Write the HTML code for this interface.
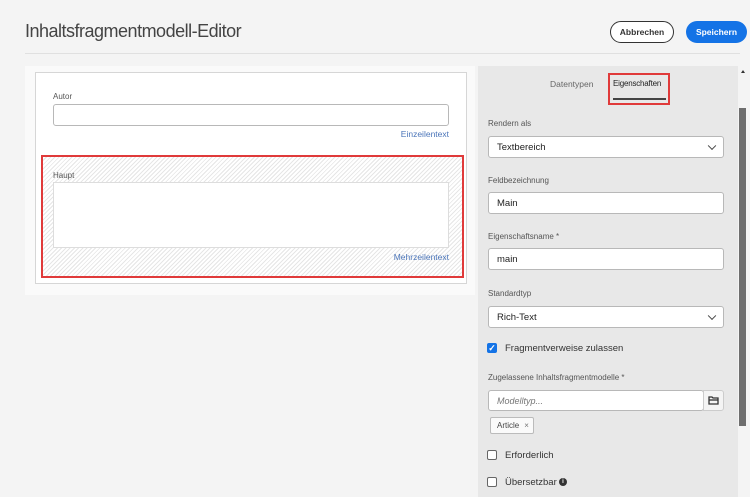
<!DOCTYPE html>
<html><head><meta charset="utf-8"><style>
*{box-sizing:border-box;margin:0;padding:0}
body{width:750px;height:497px;overflow:hidden;background:#f4f4f4;font-family:"Liberation Sans",sans-serif;position:relative;color:#333}
.a{position:absolute}
.lbl{font-size:8px;color:#555}
.inp{background:#fff;border:1px solid #b8b8b8;border-radius:3px;font-size:9.5px;color:#222;padding-left:8px;display:flex;align-items:center}
.chev{position:absolute;right:8px;top:50%;width:6px;height:6px;border-right:1.5px solid #444;border-bottom:1.5px solid #444;transform:translateY(-70%) rotate(45deg)}
.cb{width:10px;height:10px;border:1.5px solid #666;border-radius:2px;background:#fff}
.ct{font-size:9.5px;color:#333}
</style></head><body>
<div class="a" style="left:25px;top:21px;font-size:18px;color:#444;letter-spacing:-0.5px">Inhaltsfragmentmodell-Editor</div>
<div class="a" style="left:610px;top:21px;width:64px;height:22px;border:1.5px solid #333;border-radius:11px;font-size:8.5px;font-weight:bold;display:flex;align-items:center;justify-content:center;background:#fff">Abbrechen</div>
<div class="a" style="left:686px;top:21px;width:61px;height:22px;background:#1473e6;color:#fff;border-radius:11px;font-size:8.5px;font-weight:bold;display:flex;align-items:center;justify-content:center">Speichern</div>
<div class="a" style="left:25px;top:53px;width:715px;height:1px;background:#e0e0e0"></div>

<div class="a" style="left:25px;top:66px;width:450px;height:229px;background:#fafafa"></div>
<div class="a" style="left:35px;top:72px;width:432px;height:212px;background:#fff;border:1px solid #d6d6d6"></div>
<div class="a lbl" style="left:53px;top:92px">Autor</div>
<div class="a inp" style="left:53px;top:104px;width:396px;height:22px"></div>
<div class="a" style="left:350px;top:129px;width:99px;text-align:right;font-size:8.5px;color:#4b75b9">Einzeilentext</div>
<div class="a" style="left:41px;top:155px;width:423px;height:123px;border:2px solid #e03a3a;background:repeating-linear-gradient(135deg,#fff 0 2px,#e6e6e6 2px 3px)"></div>
<div class="a lbl" style="left:53px;top:171px">Haupt</div>
<div class="a" style="left:53px;top:182px;width:396px;height:66px;background:#fff;border:1px solid #ddd"></div>
<div class="a" style="left:350px;top:252px;width:99px;text-align:right;font-size:8.5px;color:#4b75b9">Mehrzeilentext</div>

<div class="a" style="left:478px;top:66px;width:260px;height:431px;background:#e8e8e8"></div>
<div class="a" style="left:738px;top:66px;width:12px;height:431px;background:#f4f4f4"></div>
<div class="a" style="left:739px;top:108px;width:7px;height:318px;background:#6e6e6e"></div>
<div class="a" style="left:741px;top:70px;width:0;height:0;border-left:2.5px solid transparent;border-right:2.5px solid transparent;border-bottom:3px solid #333"></div>
<div class="a" style="left:550px;top:79px;font-size:8.5px;color:#666">Datentypen</div>
<div class="a" style="left:613px;top:79px;font-size:8px;color:#222;letter-spacing:-0.2px">Eigenschaften</div>
<div class="a" style="left:613px;top:98px;width:53px;height:2px;background:#444"></div>
<div class="a" style="left:608px;top:73px;width:62px;height:32px;border:2px solid #e03a3a"></div>

<div class="a lbl" style="left:488px;top:119px">Rendern als</div>
<div class="a inp" style="left:488px;top:136px;width:236px;height:22px">Textbereich<span class="chev"></span></div>
<div class="a lbl" style="left:488px;top:176px">Feldbezeichnung</div>
<div class="a inp" style="left:488px;top:192px;width:236px;height:22px">Main</div>
<div class="a lbl" style="left:488px;top:232px">Eigenschaftsname *</div>
<div class="a inp" style="left:488px;top:248px;width:236px;height:22px">main</div>
<div class="a lbl" style="left:488px;top:289px">Standardtyp</div>
<div class="a inp" style="left:488px;top:306px;width:236px;height:22px">Rich-Text<span class="chev"></span></div>
<div class="a" style="left:487px;top:343px;width:10px;height:10px;background:#1473e6;border-radius:2px;color:#fff;font-size:9px;line-height:10px;text-align:center;font-weight:bold">✓</div>
<div class="a ct" style="left:505px;top:343px">Fragmentverweise zulassen</div>
<div class="a lbl" style="left:488px;top:373px">Zugelassene Inhaltsfragmentmodelle *</div>
<div class="a inp" style="left:488px;top:390px;width:216px;height:21px;font-style:italic;color:#777;font-size:9px">Modelltyp...</div>
<div class="a" style="left:703px;top:390px;width:21px;height:21px;background:#f4f4f4;border:1px solid #ccc;border-radius:0 3px 3px 0">
<svg width="19" height="19" viewBox="0 0 19 19"><path d="M5 6h3l1 1h5v6H5z" fill="none" stroke="#333" stroke-width="1.3"/><path d="M5 9h9" stroke="#333" stroke-width="1.3"/></svg></div>
<div class="a" style="left:490px;top:417px;width:44px;height:17px;background:#fafafa;border:1px solid #bbb;border-radius:2px;font-size:8px;color:#444;display:flex;align-items:center;padding-left:6px">Article <span style="margin-left:5px;color:#777">×</span></div>
<div class="a cb" style="left:487px;top:450px"></div>
<div class="a ct" style="left:505px;top:450px">Erforderlich</div>
<div class="a cb" style="left:487px;top:477px"></div>
<div class="a ct" style="left:505px;top:477px">Übersetzbar</div>
<div class="a" style="left:559px;top:478px;width:8px;height:8px;border-radius:50%;background:#333;color:#fff;font-size:6px;line-height:8px;text-align:center;font-weight:bold">i</div>
</body></html>
